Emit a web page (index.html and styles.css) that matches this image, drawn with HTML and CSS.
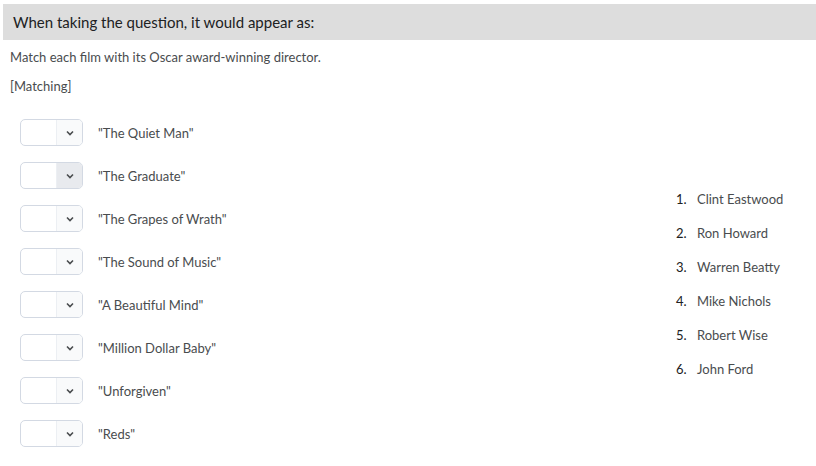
FILE: index.html
```html
<!DOCTYPE html>
<html>
<head>
<meta charset="utf-8">
<link rel="stylesheet" href="styles.css">
</head>
<body>
<div class="banner">When taking the question, it would appear as:</div>
<div class="content">
  <p class="prompt">Match each film with its Oscar award-winning director.</p>
  <p class="type">[Matching]</p>
  <div class="matching">
    <div class="choices">
      <div class="row"><div class="sel"><span class="val"></span><span class="arr"><svg width="8" height="6" viewBox="0 0 8 6"><path d="M1 1.5 L4 4.5 L7 1.5" fill="none" stroke="#494c4e" stroke-width="1.6"/></svg></span></div><span class="film">"The Quiet Man"</span></div>
      <div class="row"><div class="sel hover"><span class="val"></span><span class="arr"><svg width="8" height="6" viewBox="0 0 8 6"><path d="M1 1.5 L4 4.5 L7 1.5" fill="none" stroke="#494c4e" stroke-width="1.6"/></svg></span></div><span class="film">"The Graduate"</span></div>
      <div class="row"><div class="sel"><span class="val"></span><span class="arr"><svg width="8" height="6" viewBox="0 0 8 6"><path d="M1 1.5 L4 4.5 L7 1.5" fill="none" stroke="#494c4e" stroke-width="1.6"/></svg></span></div><span class="film">"The Grapes of Wrath"</span></div>
      <div class="row"><div class="sel"><span class="val"></span><span class="arr"><svg width="8" height="6" viewBox="0 0 8 6"><path d="M1 1.5 L4 4.5 L7 1.5" fill="none" stroke="#494c4e" stroke-width="1.6"/></svg></span></div><span class="film">"The Sound of Music"</span></div>
      <div class="row"><div class="sel"><span class="val"></span><span class="arr"><svg width="8" height="6" viewBox="0 0 8 6"><path d="M1 1.5 L4 4.5 L7 1.5" fill="none" stroke="#494c4e" stroke-width="1.6"/></svg></span></div><span class="film">"A Beautiful Mind"</span></div>
      <div class="row"><div class="sel"><span class="val"></span><span class="arr"><svg width="8" height="6" viewBox="0 0 8 6"><path d="M1 1.5 L4 4.5 L7 1.5" fill="none" stroke="#494c4e" stroke-width="1.6"/></svg></span></div><span class="film">"Million Dollar Baby"</span></div>
      <div class="row"><div class="sel"><span class="val"></span><span class="arr"><svg width="8" height="6" viewBox="0 0 8 6"><path d="M1 1.5 L4 4.5 L7 1.5" fill="none" stroke="#494c4e" stroke-width="1.6"/></svg></span></div><span class="film">"Unforgiven"</span></div>
      <div class="row"><div class="sel"><span class="val"></span><span class="arr"><svg width="8" height="6" viewBox="0 0 8 6"><path d="M1 1.5 L4 4.5 L7 1.5" fill="none" stroke="#494c4e" stroke-width="1.6"/></svg></span></div><span class="film">"Reds"</span></div>
    </div>
    <ol class="answers">
      <li><span class="num">1.</span>Clint Eastwood</li>
      <li><span class="num">2.</span>Ron Howard</li>
      <li><span class="num">3.</span>Warren Beatty</li>
      <li><span class="num">4.</span>Mike Nichols</li>
      <li><span class="num">5.</span>Robert Wise</li>
      <li><span class="num">6.</span>John Ford</li>
    </ol>
  </div>
</div>
</body>
</html>
```
FILE: styles.css
```css
html, body { margin: 0; padding: 0; background: #fff; }
body { font-family: Lato, "Liberation Sans", sans-serif; color: #494c4e; }
.banner {
  margin: 4px 0 0 3px;
  height: 36px;
  line-height: 36px;
  padding-left: 10px;
  background: #dddddd;
  color: #202122;
  font-size: 15px;
}
.content { padding-left: 10px; }
.prompt { margin: 9px 0 0; font-size: 13px; line-height: 16px; }
.type { margin: 13px 0 0; font-size: 13px; line-height: 16px; }
.matching {
  display: flex;
  align-items: center;
  margin-top: 25px;
}
.choices { display: flex; flex-direction: column; gap: 16px; padding-left: 10px; width: 656px; }
.row { display: flex; align-items: center; height: 27px; }
.sel {
  box-sizing: border-box;
  width: 63px; height: 27px;
  border: 1px solid #d3d9e3;
  border-radius: 5px;
  display: flex;
  overflow: hidden;
  background: #fff;
}
.val { flex: 1; }
.arr {
  width: 25px;
  background: #f9fafb;
  border-left: 1px solid #eceff3;
  display: flex; align-items: center; justify-content: center;
}
.hover .arr { background: #e8eaee; }
.film { margin-left: 15px; font-size: 13px; }
.answers { list-style: none; margin: 0; padding: 2px 0 0; display: flex; flex-direction: column; gap: 18px; font-size: 13px; }
.answers li { height: 16px; line-height: 16px; display: flex; }
.num { width: 21px; color: #202122; }
```
